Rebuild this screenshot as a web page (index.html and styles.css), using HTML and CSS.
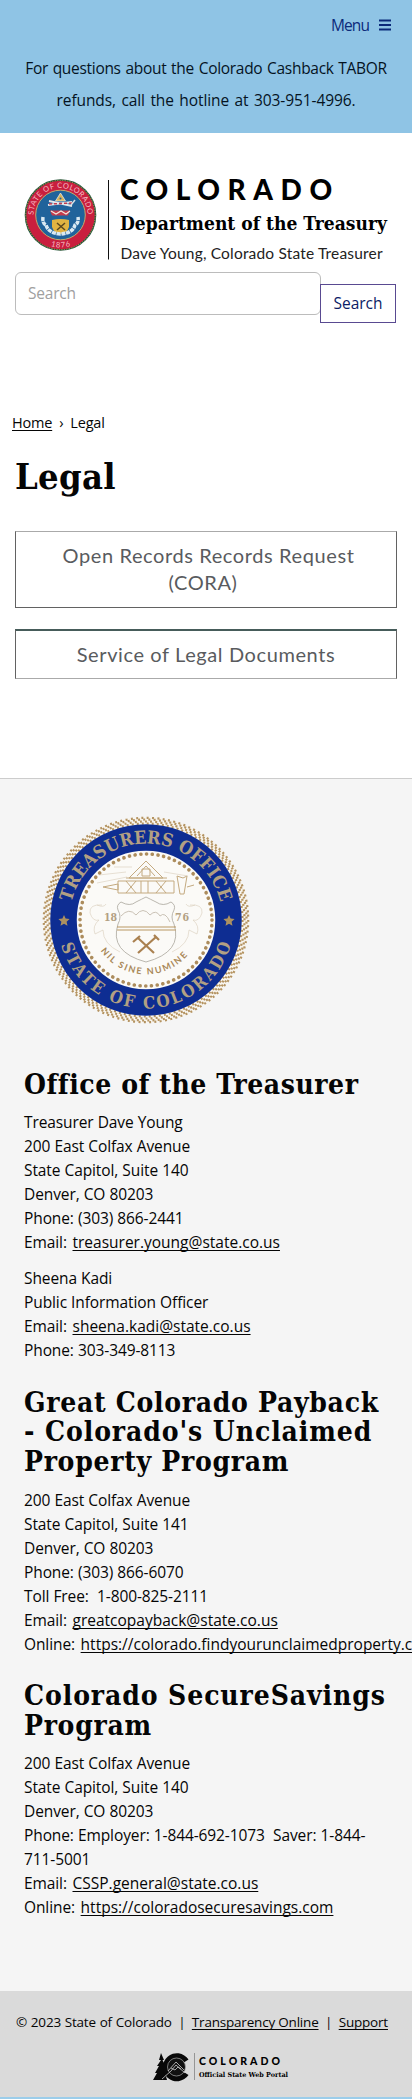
FILE: index.html
```html
<!DOCTYPE html>
<html lang="en">
<head>
<meta charset="utf-8">
<title>Legal | Department of the Treasury</title>
<link rel="stylesheet" href="styles.css">
</head>
<body>
<header class="top">
  <div class="menu"><span>Menu</span>
    <svg width="12" height="12" viewBox="0 0 12 12"><path d="M0 1.500h12M0 6h12M0 10.500h12" stroke="#0b2a7a" stroke-width="1.900"/></svg>
  </div>
  <p class="notice"><span class="n1">For questions about the Colorado Cashback TABOR</span><br><span class="n2">refunds, call the hotline at 303-951-4996.</span></p>
</header>
<section class="brand">
  <svg class="logo" width="372" height="90" viewBox="20 175 372 90">
    <defs>
      <path id="ringTop" d="M33.500 215a27 27 0 0 1 54 0"/>
      <path id="ringBottom" d="M28 215a32.500 32.500 0 0 0 65 0"/>
      <clipPath id="shieldClip"><path d="M52 220q8.500-2 17 0v7q-2 6-8.500 7-6.500-1-8.500-7z"/></clipPath>
    </defs>
    <circle cx="60.500" cy="215" r="35" fill="#c91f3e" stroke="#24583e" stroke-width="1.600"/>
    <circle cx="60.500" cy="215" r="34.700" fill="none" stroke="#d29b4a" stroke-width="1" stroke-dasharray="1 1.500"/>
    <circle cx="60.500" cy="215" r="24.800" fill="#20639b" stroke="#c6a96b" stroke-width="1"/>
    <g class="sealtext">
      <text font-size="7.500" fill="#f5bdc4"><textPath href="#ringTop" startOffset="0" textLength="84">STATE OF COLORADO</textPath></text>
      <text font-size="7.500" fill="#f5bdc4"><textPath href="#ringBottom" startOffset="41" textLength="20">1876</textPath></text>
    </g>
    <path d="M60.500 193l5 8h-10z" fill="#d9b45c" stroke="#edf0ec" stroke-width=".7"/>
    <circle cx="60.500" cy="198.500" r="1" fill="#20639b"/>
    <path d="M48 205l24-3M49 201l23 5" stroke="#e3e7ea" stroke-width="2"/>
    <path d="M49 204l23-1" stroke="#bf3d50" stroke-width="1.500" stroke-dasharray="3 2"/>
    <path d="M75 200l-4 5" stroke="#d8dfe3" stroke-width="1.500"/>
    <path d="M50 210.500h20l-2 5H52z" fill="#c53a4b"/>
    <path d="M51 211l5 3 5-3 5 3 4-3" fill="none" stroke="#f1e5dc" stroke-width="1.200"/>
    <g clip-path="url(#shieldClip)"><path d="M51 218h20v17H51z" fill="#e1b342"/><path d="M57 223l8 7m-8 0l8-7" stroke="#5a461f" stroke-width="1.500"/></g>
    <path d="M43 217q-1 6 3 8 2 8 14.500 9 12.500-1 14.500-9 4-2 3-8" fill="none" stroke="#d9e9f2" stroke-width="3.500" stroke-dasharray="4 .7"/>
    <path d="M108.500 180v79.500" stroke="#111" stroke-width="1"/>
    <text class="geo" x="120" y="200" font-size="28" textLength="212" lengthAdjust="spacing">COLORADO</text>
    <text class="slab" x="120" y="230" font-size="18.500" textLength="267" lengthAdjust="spacingAndGlyphs">Department of the Treasury</text>
    <text class="thin" x="120.500" y="259" font-size="15.500" textLength="262" lengthAdjust="spacing">Dave Young, Colorado State Treasurer</text>
  </svg>
</section>
<form class="search">
  <input class="field" type="text" placeholder="Search" aria-label="Search">
  <button class="go" type="button">Search</button>
</form>
<main>
  <nav class="crumbs"><a>Home</a><span class="sep">›</span><span>Legal</span></nav>
  <h1>Legal</h1>
  <a class="btn first"><span class="b1">Open Records Records Request</span><br><span class="b2">(CORA)</span></a>
  <a class="btn second"><span class="b3">Service of Legal Documents</span></a>
</main>
<footer>
  <section class="info">
    <svg class="seal" width="210" height="208" viewBox="-105 -104 210 208">
      <defs>
        <path id="arcTop" d="M-76.500 0a76.500 76.500 0 0 1 153 0"/>
        <path id="arcBottom" d="M-88.500 0a88.500 88.500 0 0 0 177 0"/>
        <path id="arcMotto" d="M-51 20a55 55 0 0 0 102 0"/>
      </defs>
      <circle r="99" fill="none" stroke="#f8f5ef" stroke-width="8"/>
      <g fill="none" stroke="#b49361" stroke-width="2.200">
        <circle r="96.500" stroke-dasharray="2 3.053"/>
        <circle r="98.500" stroke-dasharray="2 3.157" transform="rotate(-1)"/>
        <circle r="100.500" stroke-dasharray="2 3.262" transform="rotate(-2)"/>
        <circle r="102.200" stroke-dasharray="2 3.351" transform="rotate(-3)"/>
      </g>
      <circle r="82.500" fill="#fbfaf7" stroke="#0e2d92" stroke-width="26.500"/>
      <circle r="66" fill="none" stroke="#ac8c5c" stroke-width="3.600" stroke-linecap="round" stroke-dasharray="0.100 5.660"/>
      <g class="office">
        <text font-size="18"><textPath href="#arcTop" startOffset="18" textLength="204" lengthAdjust="spacing">TREASURERS OFFICE</textPath></text>
        <text font-size="17"><textPath href="#arcBottom" startOffset="25" textLength="228" lengthAdjust="spacing">STATE OF COLORADO</textPath></text>
        <text font-size="10.500" x="-42" y="1" textLength="13">18</text>
        <text font-size="10.500" x="29" y="1" textLength="14">76</text>
      </g>
      <g fill="#ad9160"><path id="star" d="M-82-5l1.600 3.600 4 .4-3 2.700.9 4-3.500-2-3.500 2 .9-4-3-2.700 4-.4z"/><use href="#star" x="165"/></g>
      <g fill="none" stroke="#c4aa80" stroke-width="1">
        <path d="M0-59l-17 17h34zm0 5l-9 10M0-54l9 10M-4-51h8v7h-8zM-20-42h41"/>
        <path d="M-43-33l15-3v6zM-28-39h56v12h-56zM-20-39l10 12m0-12l-10 12M-5-39v12M2-39v12M10-39l10 12m0-12l-10 12M31-44l3 18h4l3-18-4 2zM41-33l7-2"/>
        <path stroke="#d8cdbb" stroke-width=".6" d="M-20-48l-27 3m28 2l-30 6M18-48l24 4M-14-53l-18 0M-44-15q-13-1-12 8 3 9 9 7-7 6-4 14l8-4q0 14 17 22M44-15q13-1 12 8-3 9-9 7 7 6 4 14l-8-4q0 14-17 22M-49-15q7 3 9-1M49-15q-7 3-9-1"/>
        <path stroke="#aaa69c" stroke-width=".8" d="M-25-18q9 5 15 0 6-3 10-5 4 2 10 5 7 5 15 0 5 3 3 8-4 7 0 14 9 28-28 38-37-10-28-38 4-7 0-14-2-5 3-8z"/>
        <path stroke="#bdb3a3" stroke-width=".8" d="M-25-4q8-9 15-1 7-9 14 0 6-6 10 1 5-5 10 6"/>
        <path stroke="#b99765" stroke-width="1.200" d="M-29 7h59M-29 10h59"/>
        <path stroke="#aa8150" stroke-width="2.200" d="M-8 33L10 17M-8 18L8 33M-13 22l7-6M8 15l5 5"/>
      </g>
      <text class="motto" font-size="9"><textPath href="#arcMotto" startOffset="12" textLength="100">NIL SINE NUMINE</textPath></text>
    </svg>
    <h2 class="h-one">Office of the Treasurer</h2>
    <p>Treasurer Dave Young<br>200 East Colfax Avenue<br>State Capitol, Suite 140<br>Denver, CO 80203<br>Phone: (303) 866-2441<br>Email: <a>treasurer.young@state.co.us</a></p>
    <p>Sheena Kadi<br>Public Information Officer<br>Email: <a>sheena.kadi@state.co.us</a><br>Phone: 303-349-8113</p>
    <h2>Great Colorado Payback<br><span class="wide">- Colorado's Unclaimed</span><br>Property Program</h2>
    <p>200 East Colfax Avenue<br>State Capitol, Suite 141<br>Denver, CO 80203<br>Phone: (303) 866-6070<br>Toll Free:&nbsp; 1-800-825-2111<br>Email: <a>greatcopayback@state.co.us</a><br><span class="nowrap">Online: <a>https://colorado.findyourunclaimedproperty.com</a></span></p>
    <h2 class="h-three"><span class="wide">Colorado SecureSavings</span><br>Program</h2>
    <p>200 East Colfax Avenue<br>State Capitol, Suite 140<br>Denver, CO 80203<br><span class="nowrap">Phone: Employer: 1-844-692-1073&nbsp; Saver: 1-844-</span><br>711-5001<br>Email: <a>CSSP.general@state.co.us</a><br>Online: <a>https://coloradosecuresavings.com</a></p>
  </section>
  <section class="legalbar">
    <div class="links"><span>© 2023 State of Colorado</span><i>|</i><a>Transparency Online</a><i>|</i><a>Support</a></div>
    <svg class="portal" width="138" height="32" viewBox="151 2051 138 32">
      <path d="M161 2053l3 7h-1.500l3 6h-1.500l3 7h-2l2 7h-14l4-7h-2l4-7h-2l4-6h-2z" fill="#080808"/>
      <path d="M188.500 2059.500a14 14 0 1 0 0 15.500l-5.500-3.500a7.500 7.500 0 1 1 0-8.500z" fill="#080808"/>
      <circle cx="176.500" cy="2067" r="9" fill="#111" stroke="#aaa" stroke-width=".7"/>
      <path d="M162 2079l9-8 5-6 9 8M168 2071l8-9 8 8M171 2068l4 2 3-3 3 2" fill="none" stroke="#ccc" stroke-width=".8"/>
      <path d="M194.500 2053v27" stroke="#777" stroke-width=".7"/>
      <text class="geo" x="199" y="2065" font-size="10.500" textLength="81" lengthAdjust="spacing">COLORADO</text>
      <text class="slab" x="199" y="2077" font-size="6.800" textLength="89" lengthAdjust="spacingAndGlyphs">Official State Web Portal</text>
    </svg>
  </section>
</footer>
</body>
</html>
```
FILE: styles.css
```css
* { box-sizing: border-box; }
body { margin: 0; width: 412px; background: #fff; color: #050505; overflow-x: hidden; font: 15.5px/24px "Open Sans", "Noto Sans", sans-serif; letter-spacing: -0.1px; }
svg { display: block; overflow: visible; }
p, h1, h2 { margin: 0; }
a { color: inherit; text-decoration: underline; text-underline-offset: 2px; text-decoration-thickness: 1px; text-decoration-skip-ink: none; }
.top { height: 133px; background: #8fc4e5; }
.menu { display: flex; justify-content: flex-end; align-items: center; gap: 10px; height: 50px; padding: 0 21px 0 0; color: #0b2a7a; letter-spacing: -0.9px; }
.notice { text-align: center; line-height: 32px; padding-top: 2px; white-space: nowrap; color: #05131f; }
.n1 { letter-spacing: -0.3px; word-spacing: 1px; }
.n2 { word-spacing: 1.6px; }
.brand { height: 139px; padding: 42px 20px 0; }
.geo { font-family: Lato, sans-serif; font-weight: 900; }
.slab { font-family: "DejaVu Serif", serif; font-weight: 700; letter-spacing: 0; }
.thin { font-family: Lato, sans-serif; font-weight: 400; fill: #222; }
.sealtext { font-family: Lato, sans-serif; letter-spacing: 0; }
.search { display: flex; align-items: flex-start; height: 117px; padding-left: 15px; }
.field { width: 306px; height: 43px; padding: 0 12px 1px; border: 1px solid #bcbcbc; border-radius: 6px; background: #fff; font: 15.5px "Open Sans", sans-serif; letter-spacing: -0.2px; }
.field::placeholder { color: #a0a0a0; opacity: 1; }
.go { width: 76px; height: 39px; margin: 12px 0 0 -1px; padding: 0 0 1px; border: 1px solid #594a91; background: #fff; color: #0b1c66; font: 15.5px "Open Sans", sans-serif; }
main { height: 389px; }
.crumbs { display: flex; height: 50px; padding: 23px 12px 0; font-size: 14.5px; line-height: 22px; letter-spacing: -0.2px; }
.sep { margin: 0 7px; }
h1 { height: 92px; padding: 16px 0 0 15px; font: 700 36px/42px "DejaVu Serif Condensed", "DejaVu Serif", serif; letter-spacing: 0.3px; }
.btn { display: block; width: 382px; margin-left: 15px; border: 1px solid #626262; color: #595b5e; font: 20px/27px Lato, sans-serif; text-align: center; text-decoration: none; letter-spacing: .6px; }
.btn.first { height: 77px; padding-top: 10px; border-top-color: #aaa; }
.btn.second { height: 50px; margin-top: 21px; padding-top: 10px; border-top: 2px solid #465c5a; border-bottom-color: #aaa; }
.b1 { padding-left: 5px; }
.b2 { padding-right: 6px; }
footer { background: #f5f5f5; }
.info { height: 1213px; padding: 37px 24px 0; border-top: 1px solid #ccc; }
.seal { margin-left: 17px; }
h2 { font: 700 28px/29.5px "DejaVu Serif Condensed", "DejaVu Serif", serif; letter-spacing: 0.7px; white-space: nowrap; margin: 26px 0 12px; }
h2.h-one { margin: 46px 0 10px; letter-spacing: 0.55px; }
h2.h-three { margin: 25px 0 11px; }
.wide { letter-spacing: 0.9px; }
.info p { word-spacing: 0.2px; }
.info p a { margin-left: 1.5px; letter-spacing: 0; }
p + p { margin-top: 12px; }
.nowrap { white-space: nowrap; }
.office { font-family: "DejaVu Serif Condensed", "DejaVu Serif", serif; font-weight: 700; fill: #b2a083; letter-spacing: 0; }
.motto { font-family: Lato, sans-serif; font-weight: 700; fill: #a98858; letter-spacing: 0; }
.legalbar { height: 108px; padding: 19px 16px 0; background: #dadada; border-bottom: 2px solid #9bcdea; }
.links { display: flex; justify-content: space-between; white-space: nowrap; font-size: 13.5px; width: 372px; letter-spacing: -0.2px; }
.links span { word-spacing: 0.5px; }
.links i { font-style: normal; }
.portal { margin: 17px 0 0 135px; }
```
